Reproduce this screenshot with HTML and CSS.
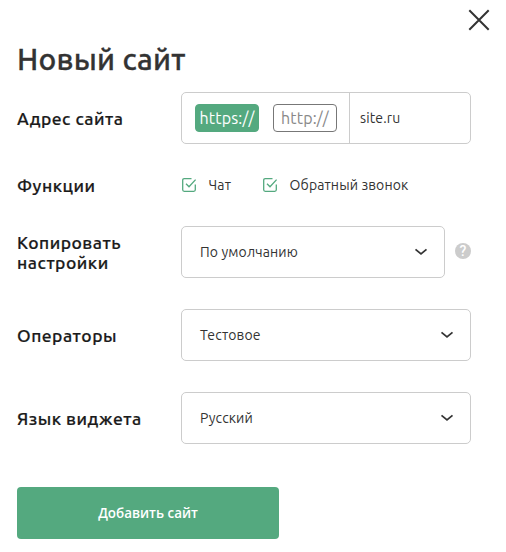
FILE: index.html
```html
<!DOCTYPE html>
<html lang="ru">
<head>
    <meta charset="UTF-8">
    <meta name="viewport" content="width=device-width, initial-scale=1.0">
    <title>Новый сайт</title>
    <link rel="stylesheet" href="styles.css">
</head>
<body>
    <div class="modal">
        <button type="button" class="close" aria-label="Закрыть">
            <svg width="22" height="22" viewBox="0 0 22 22">
                <path d="M1.3 1.3L20.7 20.7M20.7 1.3L1.3 20.7" fill="none" stroke="#333" stroke-width="2"/>
            </svg>
        </button>
        <h1 class="title">Новый сайт</h1>

        <form class="form">
            <div class="row">
                <div class="label">Адрес сайта</div>
                <div class="field">
                    <div class="protocols">
                        <span class="protocol active">https://</span>
                        <span class="protocol">http://</span>
                    </div>
                    <div class="domain">site.ru</div>
                </div>
            </div>

            <div class="row row-checks">
                <div class="label">Функции</div>
                <div class="checks">
                    <div class="check">
                        <svg width="16" height="16" viewBox="0 0 16 16">
                            <path d="M10.5 1.7H3.2Q1.7 1.7 1.7 3.2V12.8Q1.7 14.3 3.2 14.3H12.8Q14.3 14.3 14.3 12.8V7.5M5 6.8L8 9.8L14.6 2.6" fill="none" stroke="#54a97f" stroke-width="1.3"/>
                        </svg>
                        <span>Чат</span>
                    </div>
                    <div class="check">
                        <svg width="16" height="16" viewBox="0 0 16 16">
                            <path d="M10.5 1.7H3.2Q1.7 1.7 1.7 3.2V12.8Q1.7 14.3 3.2 14.3H12.8Q14.3 14.3 14.3 12.8V7.5M5 6.8L8 9.8L14.6 2.6" fill="none" stroke="#54a97f" stroke-width="1.3"/>
                        </svg>
                        <span>Обратный звонок</span>
                    </div>
                </div>
            </div>

            <div class="row">
                <div class="label">Копировать<br>настройки</div>
                <div class="field select select-short">
                    <span>По умолчанию</span>
                    <svg width="14" height="8" viewBox="0 0 14 8">
                        <path d="M1.5 1.3L7 6L12.5 1.3" fill="none" stroke="#333" stroke-width="1.7"/>
                    </svg>
                </div>
                <span class="help">?</span>
            </div>

            <div class="row">
                <div class="label">Операторы</div>
                <div class="field select">
                    <span>Тестовое</span>
                    <svg width="14" height="8" viewBox="0 0 14 8">
                        <path d="M1.5 1.3L7 6L12.5 1.3" fill="none" stroke="#333" stroke-width="1.7"/>
                    </svg>
                </div>
            </div>

            <div class="row">
                <div class="label">Язык виджета</div>
                <div class="field select">
                    <span>Русский</span>
                    <svg width="14" height="8" viewBox="0 0 14 8">
                        <path d="M1.5 1.3L7 6L12.5 1.3" fill="none" stroke="#333" stroke-width="1.7"/>
                    </svg>
                </div>
            </div>

            <button type="button" class="submit">Добавить сайт</button>
        </form>
    </div>
</body>
</html>
```
FILE: styles.css
```css
* {
    box-sizing: border-box;
}
body {
    font-family: Ubuntu, 'Noto Sans', 'Open Sans', sans-serif;
    margin: 0;
    background-color: #fff;
    color: #333;
    font-size: 14px;
    letter-spacing: 0.12px;
}
.modal {
    position: relative;
    width: 506px;
    height: 552px;
    padding: 39px 17px 0;
}
.close {
    position: absolute;
    top: 9px;
    right: 16px;
    padding: 0;
    border: none;
    background: none;
    cursor: pointer;
}
.close svg {
    display: block;
}
.title {
    margin: 0 0 13px;
    font-size: 30px;
    font-weight: 500;
    line-height: 40px;
    letter-spacing: 0.22px;
    color: #333;
    -webkit-text-stroke: 0.3px #333;
}
.form {
    display: flex;
    flex-direction: column;
    gap: 31px;
}
.row {
    display: flex;
    align-items: center;
    height: 52px;
}
.row-checks {
    height: 20px;
}
.label {
    width: 164px;
    padding-top: 2px;
    font-size: 17.5px;
    font-weight: 500;
    line-height: 20px;
    letter-spacing: 0.48px;
    color: #1a1a1a;
    -webkit-text-stroke: 0.2px #1a1a1a;
}
.row-checks .label {
    padding-top: 1px;
}
.field {
    display: flex;
    align-items: center;
    width: 290px;
    height: 52px;
    border: 1px solid #ccc;
    border-radius: 5px;
}
.protocols {
    display: flex;
    align-items: center;
    gap: 14px;
    width: 168px;
    height: 100%;
    padding-left: 13px;
    border-right: 1px solid #ccc;
}
.protocol {
    width: 64px;
    height: 28px;
    border: 1px solid #777;
    border-radius: 4px;
    font-size: 16px;
    line-height: 27px;
    letter-spacing: 0.15px;
    text-align: center;
    color: #888;
}
.protocol.active {
    border-color: #54a97f;
    background-color: #54a97f;
    color: #fff;
}
.domain {
    padding-left: 10px;
}
.checks {
    display: flex;
    gap: 31px;
}
.check {
    display: flex;
    align-items: center;
    gap: 11.6px;
    line-height: 20px;
}
.select {
    justify-content: space-between;
    padding: 0 16px 0 18px;
}
.select-short {
    width: 264px;
}
.help {
    width: 16px;
    height: 16px;
    margin: 0 0 2px 10px;
    border-radius: 50%;
    background-color: #ccc;
    color: #fff;
    font-family: Roboto, sans-serif;
    font-size: 14px;
    font-weight: 500;
    line-height: 16px;
    text-align: center;
}
.submit {
    width: 262px;
    height: 52px;
    margin-top: 12px;
    padding: 0;
    border: none;
    border-radius: 4px;
    background-color: #54a97f;
    color: #fff;
    font-family: 'Open Sans', sans-serif;
    font-size: 13.4px;
    font-weight: 600;
    cursor: pointer;
}
```
